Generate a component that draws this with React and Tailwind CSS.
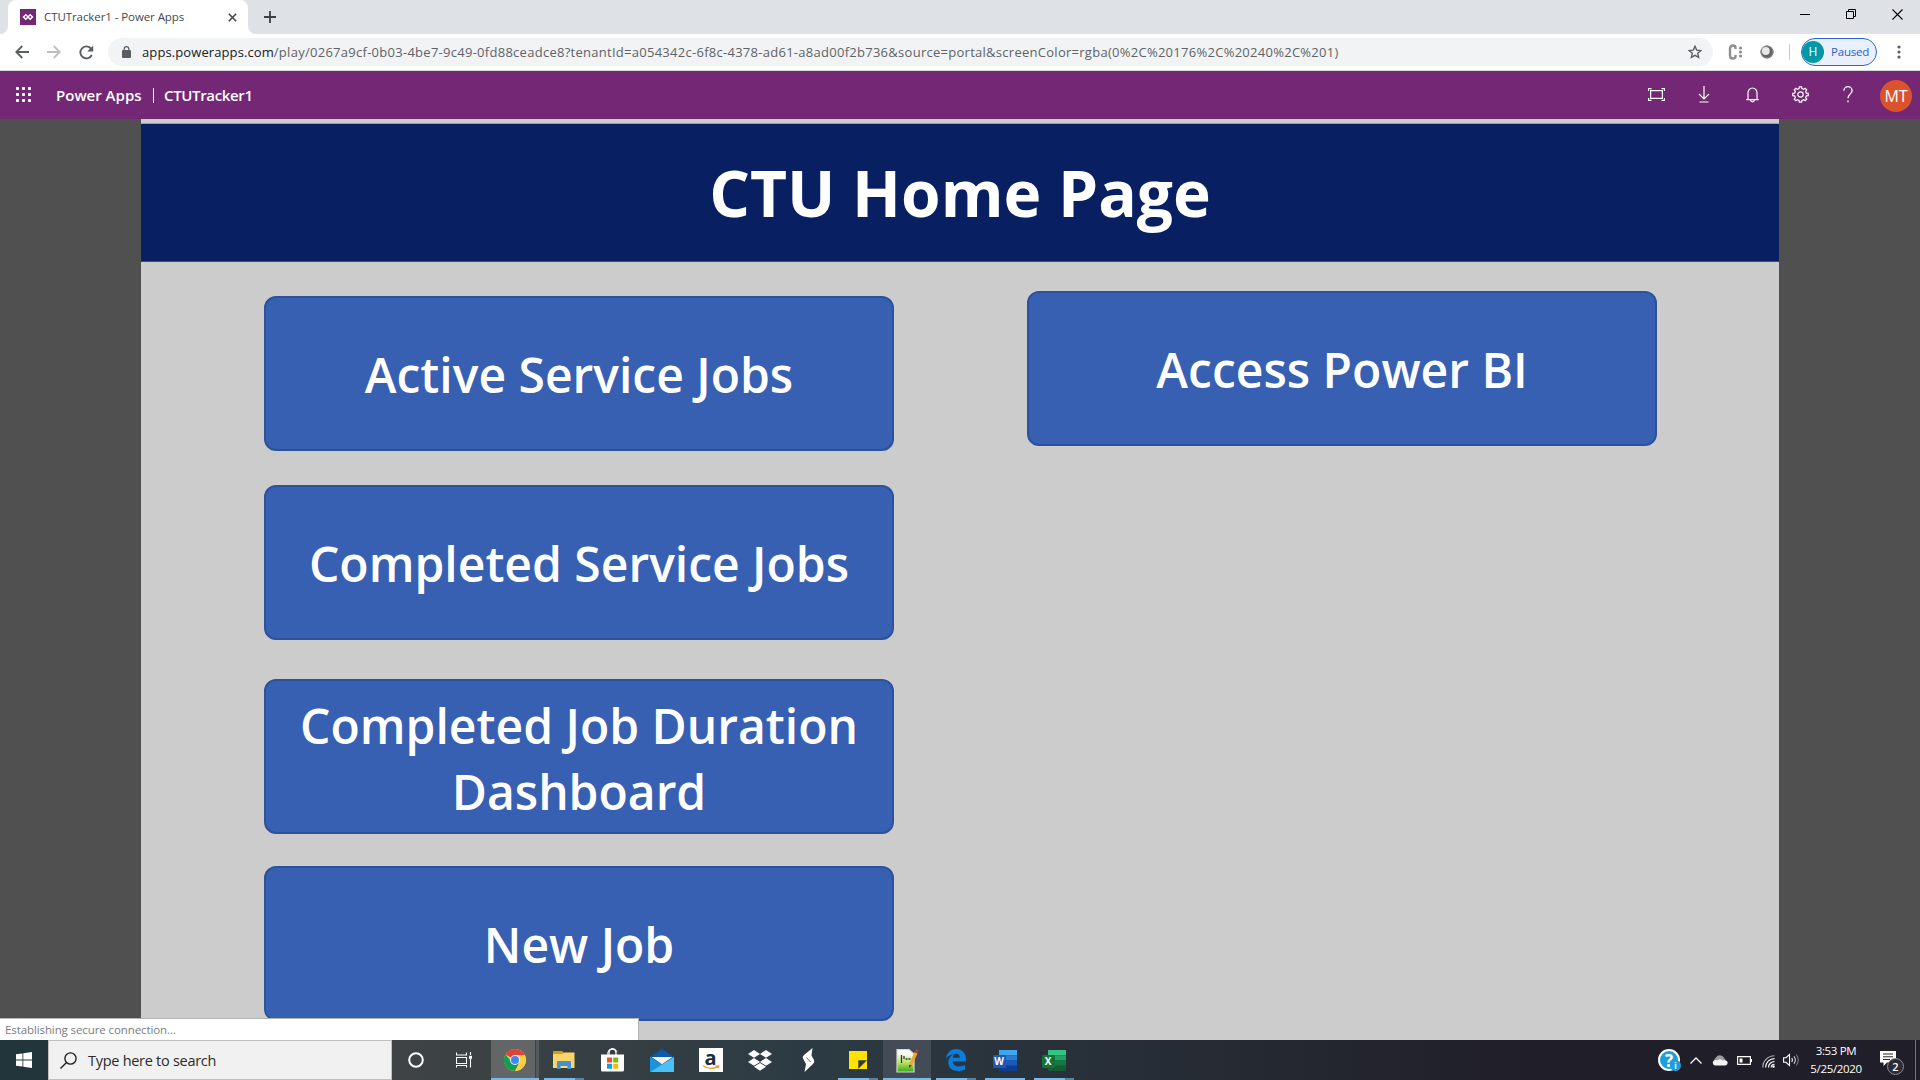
import React from 'react';

const Stroke = ({ w, h, box, sw = 1.3, color = '#fff', className = '', children }) => (
  <svg
    width={w}
    height={h}
    viewBox={box || `0 0 ${w} ${h}`}
    fill="none"
    stroke={color}
    strokeWidth={sw}
    className={'shrink-0 ' + className}
  >
    {children}
  </svg>
);

function TabStrip() {
  return (
    <div className="flex h-[34px] items-stretch bg-[#dee1e6]">
      <svg width="8" height="34" className="shrink-0">
        <path d="M8 26v8H0a8 8 0 0 0 8-8z" fill="#fff" />
      </svg>
      <div className="flex w-[240px] items-center rounded-t-lg bg-white pl-3 pr-[11.5px]">
        <svg width="16" height="16" className="shrink-0">
          <rect width="16" height="16" fill="#742774" />
          <g fill="none" stroke="#fff" strokeWidth="1.5">
            <path d="M5.8 5.7 8.1 8 5.8 10.3 3.5 8z" />
            <path d="M10.2 5.7 12.5 8l-2.3 2.3L7.9 8z" />
          </g>
        </svg>
        <span className="ml-2 text-[11.5px] tracking-[-0.08px] whitespace-nowrap text-[#45494d]">CTUTracker1 - Power Apps</span>
        <Stroke w={9} h={9} sw={1.6} color="#45494d" className="ml-auto">
          <path d="M.8.8l7.4 7.4M8.200.8.8 8.200" />
        </Stroke>
      </div>
      <svg width="8" height="34" className="shrink-0">
        <path d="M0 26v8h8a8 8 0 0 1-8-8z" fill="#fff" />
      </svg>
      <div className="flex items-center pl-2">
        <Stroke w={12} h={12} sw={1.8} color="#3c4043">
          <path d="M6 0v12M0 6h12" />
        </Stroke>
      </div>
      <div className="mr-[17px] mb-[6px] ml-auto flex items-center gap-9">
        <Stroke w={10} h={10} sw={1} color="#000">
          <path d="M0 5.500h10" />
        </Stroke>
        <Stroke w={10} h={10} sw={1} color="#000">
          <path d="M.5 2.500h7v7h-7zM2.500 2.500v-2h7v7h-2" />
        </Stroke>
        <Stroke w={11} h={11} sw={1.1} color="#000">
          <path d="M.5.5l10 10M10.500.5l-10 10" />
        </Stroke>
      </div>
    </div>
  );
}

function Toolbar() {
  return (
    <div className="flex h-[37px] items-center border-b border-[#d5d7db] bg-white">
      <Stroke w={14} h={14} sw={1.8} color="#5a5e63" className="ml-[15px]">
        <path d="M14 7H1.500M7.300 1 1.300 7l6 6" />
      </Stroke>
      <Stroke w={14} h={14} sw={1.8} color="#bcbec1" className="ml-[18px]">
        <path d="M0 7h12.500M6.700 1l6 6-6 6" />
      </Stroke>
      <Stroke w={15} h={15} sw={1.9} color="#5a5e63" className="ml-[17.5px]">
        <path d="M12.800 10A6 6 0 1 1 11.800 3.300L13 4.500" />
        <path d="M14.200.5v6H8.200z" fill="#5a5e63" stroke="none" />
      </Stroke>
      <div className="ml-[14.5px] flex h-7 w-[1605px] shrink-0 items-center rounded-full bg-[#f1f3f4]">
        <svg width="9" height="12" className="mr-[11.5px] mb-px ml-[13.5px] shrink-0">
          <rect x="0" y="4" width="9" height="8" rx="1" fill="#5a5e63" />
          <path d="M2.200 4.500V3a2.300 2.300 0 0 1 4.600 0v1.500" fill="none" stroke="#5a5e63" strokeWidth="1.200" />
        </svg>
        <span className="pt-px text-[13px] whitespace-nowrap text-[#5f6368]">
          <span className="tracking-[0.1px] text-[#202124]">apps.powerapps.com</span>
          <span className="tracking-[0.272px]">
            /play/0267a9cf-0b03-4be7-9c49-0fd88ceadce8?tenantId=a054342c-6f8c-4378-ad61-a8ad00f2b736&amp;source=portal&amp;screenColor=rgba(0%2C%20176%2C%20240%2C%201)
          </span>
        </span>
        <Stroke w={14} h={14} sw={1.4} color="#5a5e63" className="mr-[11px] ml-auto">
          <path d="M7 1.200l1.700 3.900 4.200.4-3.200 2.800.95 4.100L7 10.300l-3.650 2.100.95-4.100L1.100 5.500l4.200-.4z" />
        </Stroke>
      </div>
      <svg width="15" height="16" className="ml-[15px] shrink-0">
        <path d="M7.500 5V3.500Q7.500 1.500 5 1.500T2 4.500v7Q2 14.500 4.800 14.500T7.500 12.500V11" fill="none" stroke="#8e8e8e" strokeWidth="2.400" />
        <g fill="#8e8e8e">
          <circle cx="12.500" cy="4" r="1.600" />
          <circle cx="12.500" cy="8" r="1.600" />
          <circle cx="12.500" cy="12" r="1.600" />
        </g>
      </svg>
      <svg width="14" height="14" className="ml-[17px] shrink-0">
        <circle cx="7" cy="7" r="6.500" fill="#666" />
        <circle cx="7" cy="7" r="6" fill="none" stroke="#8b8b8b" />
        <circle cx="5.800" cy="6" r="3.900" fill="#e9e9e9" />
      </svg>
      <span className="ml-[15px] h-4 w-px bg-[#c6c8cb]" />
      <div className="ml-[11px] flex h-7 w-[76px] items-center rounded-full border border-[#2a66cf] bg-[#e9effb]">
        <span className="flex size-[22px] items-center justify-center rounded-full bg-[#0097a7] text-[12px] text-white">H</span>
        <span className="ml-[7px] text-[11.5px] tracking-[-0.2px] text-[#2a62c8]">Paused</span>
      </div>
      <svg width="4" height="14" className="ml-[19.5px] shrink-0" fill="#5a5e63">
        <circle cx="2" cy="2" r="1.600" />
        <circle cx="2" cy="7" r="1.600" />
        <circle cx="2" cy="12" r="1.600" />
      </svg>
    </div>
  );
}

function gearPath(cx, cy, ro, ri, teeth) {
  const pts = [];
  for (let i = 0; i < teeth; i++) {
    const a = (i / teeth) * Math.PI * 2 - Math.PI / 2;
    const s = Math.PI / teeth;
    [[-0.6, ri], [-0.38, ro], [0.38, ro], [0.6, ri]].forEach(([k, r]) => {
      pts.push(`${(cx + Math.cos(a + k * s) * r).toFixed(2)} ${(cy + Math.sin(a + k * s) * r).toFixed(2)}`);
    });
  }
  return 'M' + pts.join('L') + 'z';
}

function AppHeader() {
  return (
    <div className="flex h-12 items-center bg-[#742774] text-white">
      <svg width="16" height="15" className="mb-[2px] ml-4 shrink-0" fill="#fff">
        {[0, 6, 12].map((y) => [0, 6, 12].map((x) => <rect key={x + '-' + y} x={x} y={y} width="3" height="3" rx="0.800" />))}
      </svg>
      <div className="ml-[24px] flex items-center text-[15px] font-semibold whitespace-nowrap">
        <span className="w-[97px]">Power Apps</span>
        <span className="h-[15px] w-px bg-white" />
        <span className="ml-[10px] tracking-[-0.35px]">CTUTracker1</span>
      </div>
      <div className="ml-auto flex items-center">
        <Stroke w={17} h={13} sw={1.2} className="mr-[33px] mb-[2px]">
          <path d="M2.600 2.600h11.800v7.800H2.600zM.5 3V.6h3M13.500.6h3V3M.5 10v2.400h3M13.500 12.400h3V10" />
        </Stroke>
        <Stroke w={12} h={17} sw={1.2} className="mr-[36px] mb-px">
          <path d="M6 0v13M1 8l5 5 5-5M1.500 16h9" />
        </Stroke>
        <Stroke w={13} h={16} sw={1.2} className="mr-[33px] mb-px">
          <path d="M.3 12.600h12.400M2 12.500V6a4.500 5 0 0 1 9 0v6.500M4.600 13a1.900 1.900 0 0 0 3.800 0" />
        </Stroke>
        <Stroke w={17} h={17} sw={1.2} className="mr-[34.5px] mb-px">
          <path d={gearPath(8.5, 8.5, 7.8, 6, 8)} />
          <circle cx="8.500" cy="8.500" r="2.700" />
        </Stroke>
        <Stroke w={10} h={17} sw={1.3} className="mr-[27px] mb-px">
          <path d="M.9 4.800A4.100 4.100 0 0 1 9.100 4.800C9.100 7.700 5 8.300 5 12.300M5 14.600v1.700" />
        </Stroke>
        <span className="mt-px mr-2 flex size-8 items-center justify-center rounded-full bg-[#da532c] text-[16px]">MT</span>
      </div>
    </div>
  );
}

function JobButton({ children, className = '' }) {
  return (
    <button
      className={
        'flex h-[155px] w-[630px] shrink-0 items-center justify-center rounded-[12px] border-2 border-[#2d529b] bg-[#3860b2] text-center text-[48px] leading-[66px] font-semibold text-white ' +
        className
      }
    >
      <span>{children}</span>
    </button>
  );
}

function Canvas() {
  return (
    <main className="relative flex min-h-0 flex-1 justify-center overflow-hidden bg-[#505050]">
      <div className="w-[1638px] bg-[#ccc]">
        <h1 className="mt-[4px] flex h-[139px] items-center justify-center border-t border-b border-t-[#95a1b8] border-b-[#3b4e80] bg-[#081f62] text-[64px] font-bold text-white">
          CTU Home Page
        </h1>
        <div className="flex justify-between pr-[122px] pl-[123px]">
          <div className="flex flex-col pt-[34px]">
            <JobButton className="pt-[3px]">Active Service Jobs</JobButton>
            <JobButton className="mt-[34px] pt-[2px]">Completed Service Jobs</JobButton>
            <JobButton className="mt-[39px] pt-[5px]">
              Completed Job Duration
              <br />
              Dashboard
            </JobButton>
            <JobButton className="mt-[32px] pt-[2px]">New Job</JobButton>
          </div>
          <div className="pt-[29px]">
            <JobButton className="pt-[3px]">Access Power BI</JobButton>
          </div>
        </div>
      </div>
      <div className="absolute bottom-0 left-0 flex h-[22px] w-[639px] items-center border-t border-r border-[#b4b4b4] bg-white pl-[5px] text-[11.5px] tracking-[-0.1px] text-[#7a7c7f]">
        Establishing secure connection...
      </div>
    </main>
  );
}

function Chrome() {
  return (
    <svg width="22" height="22" viewBox="0 0 22 22">
      <circle cx="11" cy="11" r="11" fill="#ffcd40" />
      <path d="M11 11 1.470 5.500A11 11 0 0 1 20.530 5.500L20.500 6H11z" fill="#db4437" />
      <path d="M11 11H6L1.470 5.500A11 11 0 0 0 11 22l4.500-8z" fill="#0f9d58" />
      <path d="M11 6h9.800A11 11 0 0 1 11 22l4.400-8.500z" fill="#ffcd40" />
      <circle cx="11" cy="11" r="5" fill="#f1f1f1" />
      <circle cx="11" cy="11" r="4" fill="#4285f4" />
    </svg>
  );
}

function Explorer() {
  return (
    <svg width="22" height="18" viewBox="0 0 22 18">
      <path d="M0 1Q0 0 1 0h8l2 2-1 2H0z" fill="#d99b10" />
      <path d="M0 3h9l2-1.500h10.500V17H0z" fill="#fbd567" />
      <path d="M4 18v-7q0-1 1-1h12q1 0 1 1v7h-3.500v-3h-7v3z" fill="#3e94d6" />
    </svg>
  );
}

function Store() {
  return (
    <svg width="23" height="24" viewBox="0 0 23 24">
      <path d="M8 8V4.500a3.500 3.500 0 0 1 7 0V8" fill="none" stroke="#fff" strokeWidth="1.300" />
      <path d="M6.500 6.500V5.500Q7 1.200 11 .7q3.500-.3 5 3" fill="none" stroke="#fff" strokeWidth="1" />
      <path d="M0 6.500h23V22q0 1.500-1.500 1.500h-20Q0 23.500 0 22z" fill="#fff" />
      <path d="M6 9.500h5v5H6z" fill="#f25022" />
      <path d="M12.200 9.500h5v5h-5z" fill="#7fba00" />
      <path d="M6 15.700h5v5H6z" fill="#00a4ef" />
      <path d="M12.200 15.700h5v5h-5z" fill="#ffb900" />
    </svg>
  );
}

function Mail() {
  return (
    <svg width="24" height="23" viewBox="0 0 24 23">
      <path d="M0 8 12 0l12 8z" fill="#0a5ba8" />
      <path d="M0 8l12 8 12-8v15H0z" fill="#27a5ea" />
      <path d="M24 8v15H0z" fill="#4bc0f6" />
      <path d="M0 8l12 7.500L0 23z" fill="#1c93dd" />
      <path d="M1.500 8h21L12 15.200z" fill="#f4f4f4" />
    </svg>
  );
}

function Amazon() {
  return (
    <div className="relative size-6 bg-white text-center text-[20px] leading-[19px] font-bold text-[#232b3a]">
      a
      <svg width="18" height="5" className="absolute bottom-[2px] left-[3px]">
        <path d="M1 .8q8 5 15 .6M13.500.8h3l-.8 2.600" fill="none" stroke="#f59a23" strokeWidth="1.300" />
      </svg>
    </div>
  );
}

function Dropbox() {
  return (
    <svg width="24" height="21" viewBox="0 0 24 21" fill="#fff">
      <path d="M6 0l6 3.900-6 3.900L0 3.900zM18 0l6 3.900-6 3.900-6-3.900zM6 8l6 3.900-6 3.900-6-3.900zM18 8l6 3.900-6 3.900-6-3.900zM12 12.900l6 3.900L12 20.700 6 16.800z" />
    </svg>
  );
}

function Bolt() {
  return (
    <svg width="13" height="24" viewBox="0 0 13 24" fill="#fff">
      <path d="M10.500 0 9.500 7.500 12 12q1 2.300-1 4L2.500 24l1.500-8L1 10.500Q0 8.500 2 7z" />
      <path d="M4.500 9.500 8.500 14" stroke="#2d3b43" strokeWidth=".7" />
    </svg>
  );
}

function Sticky() {
  return (
    <svg width="18" height="18" viewBox="0 0 18 18">
      <path d="M0 0h18v9.500L9.500 18H0z" fill="#ffe400" />
      <path d="M9.300 17.800V9.300H18z" fill="#33363c" />
      <path d="M18 9.500V18H9.500z" fill="#ffe400" />
    </svg>
  );
}

function NotepadPlus() {
  return (
    <svg width="24" height="25" viewBox="0 0 24 25">
      <defs>
        <linearGradient id="npp" x1="0" y1="0" x2="0" y2="1">
          <stop offset="0.200" stopColor="#f9fbf5" />
          <stop offset="0.600" stopColor="#b2e25a" />
          <stop offset="1" stopColor="#35a818" />
        </linearGradient>
      </defs>
      <path d="M2 1.500h12l5 4.500v18H2z" fill="url(#npp)" stroke="#d5d8d2" strokeWidth="1.200" />
      <path d="M6.500 7v8M9 8v3M10.500 11h2M13.500 11h2" stroke="#30382c" strokeWidth="1.300" fill="none" />
      <path d="M14 17 19.500 4l3 1.500-5.500 12-3 2.200z" fill="#f3a62b" />
      <path d="M19.500 4l1.400-3 3 1.500-1.400 3z" fill="#b03c32" />
      <path d="M14 17l3 .6-3 2.200z" fill="#4c3420" />
    </svg>
  );
}

function Edge() {
  return (
    <svg width="20" height="22" viewBox="0 0 20 22" fill="#0a7cdb">
      <path d="M0 9.700C.8 3.600 5 0 10.200 0 16.400 0 20 4.400 20 10v2.500H6.700c.3 3.500 3 5 6.300 5 2.300 0 4.300-.7 6-1.700v4.400C17.200 21.400 14.700 22 12 22 6 22 2.300 18.700 2.300 13.500c0-3.700 2-6.500 5.300-7.900C4.300 5.800 1.700 7.200 0 9.700zM6.800 8.800h7c0-2.600-1.400-4.100-3.500-4.100S7.200 6.300 6.800 8.800z" />
    </svg>
  );
}

function Office({ letter, bands, tile }) {
  return (
    <div className="relative h-[21px] w-6">
      <svg width="24" height="21">
        {bands.map((c, i) => (
          <rect key={c} x="6" y={i * 5.25} width="18" height="5.300" fill={c} />
        ))}
        <rect y="5" width="13" height="13" rx="1" fill={tile} />
      </svg>
      <span className="absolute top-[5px] left-0 w-[13px] text-center text-[10px] leading-[13px] font-bold text-white">{letter}</span>
    </div>
  );
}

const WORD = ['#41a5ee', '#2b7cd3', '#185abd', '#103f91'];
const EXCEL = ['#33c481', '#21a366', '#107c41', '#185c37'];

const TASKS = [
  { id: 'chrome', icon: <Chrome />, bg: 'bg-[#626667]', bar: 'w-12', wide: true },
  { id: 'explorer', icon: <Explorer />, bar: 'w-[31px]', extra: true },
  { id: 'store', icon: <Store /> },
  { id: 'mail', icon: <Mail /> },
  { id: 'amazon', icon: <Amazon /> },
  { id: 'dropbox', icon: <Dropbox /> },
  { id: 'bolt', icon: <Bolt /> },
  { id: 'sticky', icon: <Sticky />, bar: 'w-[31px]', extra: true },
  { id: 'npp', icon: <NotepadPlus />, bg: 'bg-[#424b56]', bar: 'w-12' },
  { id: 'edge', icon: <Edge />, bar: 'w-[31px]', extra: true },
  { id: 'word', icon: <Office letter="W" bands={WORD} tile="#2258b5" />, bar: 'w-10' },
  { id: 'excel', icon: <Office letter="X" bands={EXCEL} tile="#15713c" />, bar: 'w-[31px]', extra: true },
];

function Task({ icon, bg, bar, extra, wide }) {
  return (
    <div className="flex w-[49px] justify-center">
      <div className={'relative flex h-10 w-12 items-center justify-center ' + (bg || '')}>
        {wide && <span className="absolute top-0 right-0 h-10 w-1 border-l border-[#3e4344] bg-[#54595a]" />}
        {icon}
        {bar && (
          <div className="absolute bottom-0 left-0 flex w-12 justify-center">
            <span className={'h-[2px] bg-[#76b9ed] ' + bar} />
            {extra && <span className="h-[2px] w-[9px] bg-[#5382aa]" />}
          </div>
        )}
      </div>
    </div>
  );
}

function Taskbar() {
  return (
    <footer className="flex h-10 shrink-0 items-stretch bg-[#201e28]">
      <div className="flex w-12 items-center justify-center bg-[#22353b]">
        <svg width="16" height="16" fill="#fff">
          <path d="M0 2.300l6.500-.9v6.200H0zM7.300 1.300 16 0v7.600H7.300zM0 8.400h6.500v6.200L0 13.700zM7.300 8.400H16V16l-8.700-1.300z" />
        </svg>
      </div>
      <div className="flex w-[344px] items-center border border-[#c0c0c0] bg-[#f1f1f1]">
        <Stroke w={17} h={17} sw={1.4} color="#222" className="ml-[11px]">
          <circle cx="10.500" cy="6.500" r="5.600" />
          <path d="M6.500 10.500.5 16.500" />
        </Stroke>
        <span className="ml-[11px] pt-px text-[14.5px] tracking-[-0.28px] text-[#2b2b2b]">Type here to search</span>
      </div>
      <div className="flex flex-1 bg-linear-to-r from-[#3f4344] from-0% via-[#2c3b43] via-27% to-[#201e28] to-75%">
        <div className="flex w-12 items-center justify-center">
          <Stroke w={16} h={16} sw={2}>
            <circle cx="8" cy="8" r="6.800" />
          </Stroke>
        </div>
        <div className="flex w-[50px] items-center pl-4">
          <Stroke w={16} h={16} sw={1.1}>
            <path d="M.5.5v2.500h10V.5M.5 5.500h10v6H.5zM.5 15.500v-2h10v2M14.500 0v3M14.500 7v8.500" />
            <rect x="13" y="3.800" width="3" height="3" fill="#fff" stroke="none" />
          </Stroke>
        </div>
        {TASKS.map(({ id, ...t }) => (
          <Task key={id} {...t} />
        ))}
        <div className="ml-auto flex items-center text-white">
          <div className="relative mr-[10px] flex size-[22px] items-center justify-center rounded-full border-2 border-white bg-[#1c9fdc] text-[17px] leading-none font-bold">
            ?
            <span className="absolute -right-[3px] -bottom-[2px] flex size-[11px] items-center justify-center rounded-full bg-[#1c9fdc] text-[8px] leading-none">i</span>
          </div>
          <Stroke w={12} h={7} sw={1.3} className="mr-[10px]">
            <path d="M.5 6.500 6 1l5.500 5.500" />
          </Stroke>
          <svg width="16" height="11" className="mr-[9px]">
            <path d="M2.500 7A4 4 0 0 1 4 2.500 4.500 4.500 0 0 1 12 2.800L13.500 5 6 8z" fill="#9c9ca0" />
            <path d="M3 10.500A2.800 2.800 0 0 1 3 5q1.500-.3 2.500.4Q8 3 10.500 5.500 12 4.800 13.500 5.200a2.700 2.700 0 0 1 0 5.300z" fill="#f3f3f3" />
          </svg>
          <Stroke w={15} h={9} sw={1.1} className="mr-[10px]">
            <path d="M.6.6h12.800v7.800H.6zM14.500 3v3" />
            <path d="M2.500 2.500h3v4h-3z" fill="#fff" stroke="none" />
          </Stroke>
          <svg width="13" height="13" className="mt-[2px] mr-[8px]" fill="none" stroke="#fff" strokeWidth="1.100">
            <path d="M.8 12.500A11.700 11.700 0 0 1 12.500.8" opacity=".65" />
            <path d="M3.600 12.500a8.900 8.900 0 0 1 8.900-8.900M6.500 12.500a6 6 0 0 1 6-6M9.200 12.500a3.300 3.300 0 0 1 3.300-3.300" />
            <circle cx="11.500" cy="11.500" r="1.200" fill="#fff" stroke="none" />
          </svg>
          <svg width="17" height="14" fill="none" stroke="#fff" strokeWidth="1.100">
            <path d="M.6 4.700H3L6.500 1.500v11L3 9.300H.6zM8.800 5q1.300 2 0 4" />
            <path d="M11 3.200q2.700 3.800 0 7.600" opacity=".8" />
            <path d="M13.300 1.500q4 5.500 0 11" opacity=".4" />
          </svg>
          <div className="ml-[7px] flex w-[58px] flex-col items-center text-[11.5px] leading-[18px] tracking-[-0.35px]">
            <span>3:53 PM</span>
            <span>5/25/2020</span>
          </div>
          <div className="relative ml-[15px] h-[26px] w-[24px]">
            <svg width="17" height="17" className="mt-[3px]">
              <path d="M0 1h16v11.500H7L3.500 16v-3.500H0z" fill="#fff" />
              <path d="M3 4h10M3 6.800h10M3 9.500h7" stroke="#222029" />
            </svg>
            <span className="absolute right-0 -bottom-[2px] flex size-[17px] items-center justify-center rounded-full border border-[#8d8c91] bg-[#2d2c34] text-[11px] leading-none font-semibold">2</span>
          </div>
          <span className="mr-[4px] ml-[11px] h-10 w-px bg-[#77767b]" />
        </div>
      </div>
    </footer>
  );
}

export default function App() {
  return (
    <div className="flex h-[1080px] w-[1920px] flex-col overflow-hidden font-['Open_Sans','Noto_Sans',sans-serif]">
      <TabStrip />
      <Toolbar />
      <AppHeader />
      <Canvas />
      <Taskbar />
    </div>
  );
}
